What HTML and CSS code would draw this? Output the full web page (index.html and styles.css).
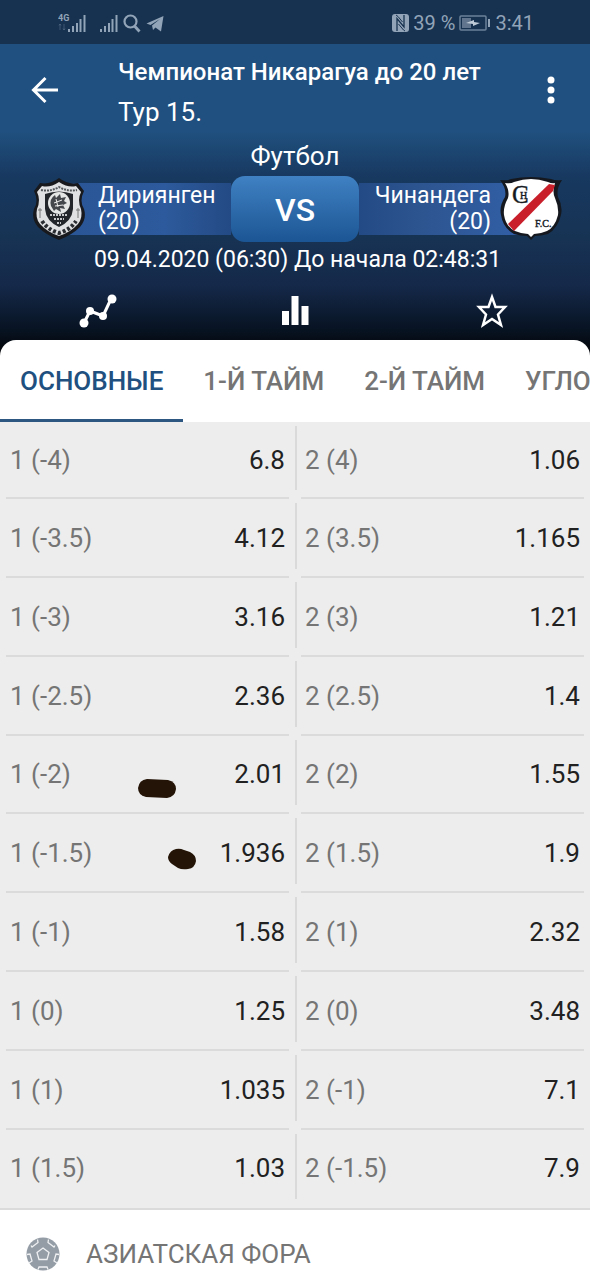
FILE: index.html
```html
<!DOCTYPE html>
<html lang="ru">
<head>
    <meta charset="utf-8">
    <meta name="viewport" content="width=device-width, initial-scale=1">
    <title>Чемпионат Никарагуа до 20 лет</title>
    <link rel="stylesheet" href="styles.css">
</head>
<body>
    <div class="status-bar">
        <div class="status-left">
            <svg width="28" height="20" viewBox="0 0 28 20" fill="currentColor">
                <text x="0" y="8" font-size="9" font-weight="700">4G</text>
                <path d="M2 11v6M1 12.500l1-1.500 1 1.500M6 11v6M5 15.500l1 1.500 1-1.500" fill="none" stroke="currentColor" opacity=".3"/>
                <path d="M10 16h2v3h-2zM14 13h2v6h-2zM18 10h2v9h-2zM21.500 6h2v13h-2zM25.500 2h2v17h-2z"/>
            </svg>
            <svg class="signal" width="19" height="20" viewBox="0 0 19 20" fill="currentColor">
                <path d="M1 16h2v3H1zM5 13h2v6H5zM9 10h2v9H9zM12.500 6h2v13h-2zM16.500 2h2v17h-2z"/>
            </svg>
            <svg width="18" height="20" viewBox="0 0 18 20" fill="none" stroke="currentColor" stroke-width="2.200">
                <circle cx="7.500" cy="8.500" r="6"/>
                <path d="M11.500 13l5 5.500" stroke-width="2.800"/>
            </svg>
            <svg width="18" height="20" viewBox="0 0 18 20" fill="currentColor">
                <path d="M.5 10.500L17.500 3 15 18.500 9.500 14.500 7 17 6 12.500 14 6 4.500 12z"/>
            </svg>
        </div>
        <div class="status-right">
            <svg width="17" height="18" viewBox="0 0 17 18">
                <rect width="17" height="18" rx="3" fill="currentColor"/>
                <path d="M5 17V4.500l7 8.500V1" fill="none" stroke="#173250" stroke-width="1.300"/>
                <path d="M4 1l2 1.500 4.500 5.500M6.500 10l5 6 1.500 1" fill="none" stroke="#173250"/>
            </svg>
            <span>39 %</span>
            <svg class="battery" width="32" height="16" viewBox="0 0 32 16">
                <rect x="1" y="1" width="26" height="14" rx="1" fill="none" stroke="currentColor" stroke-width="1.500" opacity=".7"/>
                <path d="M3 3h9v10H3z" fill="currentColor" opacity=".6"/>
                <path d="M7 8l8-3v2l6 1-7 3V9z" fill="#c0cbd8"/>
                <path d="M29 4h2v8h-2z" fill="currentColor"/>
            </svg>
            <span>3:41</span>
        </div>
    </div>

    <header class="header">
        <div class="app-bar">
            <button class="icon-button" aria-label="Назад">
                <svg width="28" height="28" viewBox="0 0 28 28" fill="none" stroke="#fff" stroke-width="3">
                    <path d="M27 14H3M14.500 2L2.500 14l12 12"/>
                </svg>
            </button>
            <div class="titles">
                <h1>Чемпионат Никарагуа до 20 лет</h1>
                <p>Тур 15.</p>
            </div>
            <button class="icon-button" aria-label="Меню">
                <svg width="8" height="28" viewBox="0 0 8 28" fill="#fff">
                    <circle cx="4" cy="4" r="3.500"/>
                    <circle cx="4" cy="14" r="3.500"/>
                    <circle cx="4" cy="24" r="3.500"/>
                </svg>
            </button>
        </div>

        <p class="sport">Футбол</p>

        <div class="match">
            <div class="team home">
                <svg class="crest" width="54" height="64" viewBox="0 0 54 64">
                    <path d="M27 1Q36 8 46 6l6 8q-5 10 0 18 3 10-4 18Q40 58 27 63 14 58 6 50-1 42 2 32q5-8 0-18l6-8Q18 8 27 1z" fill="#17191c"/>
                    <path d="M27 5Q36 11 44 9l5 6q-4 8 0 17 2 9-3 15Q39 55 27 59 15 55 8 47 3 41 5 32q4-9 0-17l5-6Q18 11 27 5z" fill="#dfe1e2"/>
                    <path d="M9 13q9 2 18-3 9 5 18 3" fill="none" stroke="#55585b" stroke-width="2" stroke-dasharray="2 1"/>
                    <path d="M13 17q14-5 28 0v15q-1 12-14 18-13-6-14-18z" fill="#222529"/>
                    <circle cx="27" cy="26" r="11" fill="#e5e6e6"/>
                    <path d="M19 29q-2-7 4-11l1 3 4-4 1 4 5-1-2 4 3 2-4 2 2 4-5-1 1 4-5-3-2 2z" fill="#44484c"/>
                    <path d="M22 26l8-3M23 29l8-1M24 22l2 8" stroke="#eee"/>
                    <path d="M18 38h18M22 42h10M25 46h4" stroke="#c5c7c9" stroke-width="2" stroke-dasharray="2 1"/>
                    <path d="M8 31v10M46 31v10M6 33h4M44 33h4" stroke="#777"/>
                    <path d="M10 44q6 9 17 12 11-3 17-12" fill="none" stroke="#292c30" stroke-width="4" stroke-dasharray="3 2"/>
                </svg>
                <span class="team-name">Дириянген<br>(20)</span>
            </div>
            <div class="versus">VS</div>
            <div class="team away">
                <span class="team-name">Чинандега<br>(20)</span>
                <svg class="crest" width="64" height="64" viewBox="0 0 64 64">
                    <path d="M1 3q7 1 11-1Q22 0 32 0t20 2q5 2 11 1-6 9-4 17 5 9 3 18-3 13-13 19-7 2-13 2l-4 4-4-4q-7 0-13-2Q4 51 2 38q-2-9 4-18Q8 12 1 3z" fill="#15191f"/>
                    <path d="M6 6q6 1 9-1Q24 2 32 2t17 3q4 2 7 1-3 9 0 15 4 9 3 17-3 12-11 16-7 3-13 3l-3 3-3-3q-6 0-13-3Q7 50 5 38q-1-8 4-17 2-7-3-15z" fill="#fff"/>
                    <path d="M50 7l6 1-2 6-39 40-6-7z" fill="#c91f2b"/>
                    <text class="crest-letter" x="13" y="26" font-size="25">C</text>
                    <text class="crest-letter" x="21" y="22" font-size="10">H</text>
                    <text class="crest-letter" x="36" y="50" font-size="10">F.C.</text>
                </svg>
            </div>
        </div>

        <p class="start-time">09.04.2020 (06:30) До начала 02:48:31</p>

        <div class="actions">
            <button class="icon-button" aria-label="График">
                <svg width="38" height="34" viewBox="0 0 38 34" fill="#fff">
                    <path d="M5 29l6-12 13 5 8-17" fill="none" stroke="#fff" stroke-width="3"/>
                    <circle cx="5" cy="29" r="4.500"/>
                    <circle cx="11" cy="17" r="4"/>
                    <circle cx="24" cy="22" r="4"/>
                    <circle cx="33" cy="5" r="4.500"/>
                </svg>
            </button>
            <button class="icon-button" aria-label="Статистика">
                <svg width="28" height="32" viewBox="0 0 28 32" fill="#fff">
                    <path d="M1 16h7v14H1zM10.500 1h7v29h-7zM20.500 11h7v19h-7z"/>
                </svg>
            </button>
            <button class="icon-button" aria-label="В избранное">
                <svg width="32" height="36" viewBox="0 0 32 36" fill="none" stroke="#fff" stroke-width="2.500">
                    <path d="M16 4l3.500 10H29l-7 7.500 3 10.500-9-6-9 6 3-10.500L3 14h9.500z"/>
                </svg>
            </button>
        </div>
    </header>

    <main class="sheet">
        <nav class="tabs">
            <a href="#main" class="tab active">ОСНОВНЫЕ</a>
            <a href="#half1" class="tab">1-Й ТАЙМ</a>
            <a href="#half2" class="tab">2-Й ТАЙМ</a>
            <a href="#corners" class="tab">УГЛОВЫЕ</a>
        </nav>

        <div class="odds" id="main">
            <div class="row">
                <button class="bet"><span>1 (-4)</span><b>6.8</b></button>
                <button class="bet"><span>2 (4)</span><b>1.06</b></button>
            </div>
            <div class="row">
                <button class="bet"><span>1 (-3.5)</span><b>4.12</b></button>
                <button class="bet"><span>2 (3.5)</span><b>1.165</b></button>
            </div>
            <div class="row">
                <button class="bet"><span>1 (-3)</span><b>3.16</b></button>
                <button class="bet"><span>2 (3)</span><b>1.21</b></button>
            </div>
            <div class="row">
                <button class="bet"><span>1 (-2.5)</span><b>2.36</b></button>
                <button class="bet"><span>2 (2.5)</span><b>1.4</b></button>
            </div>
            <div class="row">
                <button class="bet"><span>1 (-2)</span><b>2.01</b></button>
                <button class="bet"><span>2 (2)</span><b>1.55</b></button>
                <svg class="mark mark-long" width="40" height="20" viewBox="0 0 40 20">
                    <path d="M10 1L31 2Q39 4 39 11 38 19 30 20L9 19Q1 17 1 10 2 2 10 1z" fill="#241407"/>
                </svg>
            </div>
            <div class="row">
                <button class="bet"><span>1 (-1.5)</span><b>1.936</b></button>
                <button class="bet"><span>2 (1.5)</span><b>1.9</b></button>
                <svg class="mark mark-short" width="30" height="22" viewBox="0 0 30 22">
                    <path d="M9 1q4-1 8 1l6 2q6 3 6 9-1 7-8 8-6 1-10-1l-6-4Q1 13 1 9 3 2 9 1z" fill="#241407"/>
                </svg>
            </div>
            <div class="row">
                <button class="bet"><span>1 (-1)</span><b>1.58</b></button>
                <button class="bet"><span>2 (1)</span><b>2.32</b></button>
            </div>
            <div class="row">
                <button class="bet"><span>1 (0)</span><b>1.25</b></button>
                <button class="bet"><span>2 (0)</span><b>3.48</b></button>
            </div>
            <div class="row">
                <button class="bet"><span>1 (1)</span><b>1.035</b></button>
                <button class="bet"><span>2 (-1)</span><b>7.1</b></button>
            </div>
            <div class="row">
                <button class="bet"><span>1 (1.5)</span><b>1.03</b></button>
                <button class="bet"><span>2 (-1.5)</span><b>7.9</b></button>
            </div>
        </div>

        <h2 class="market">
            <svg width="34" height="34" viewBox="0 0 34 34">
                <circle cx="17" cy="17" r="16.500" fill="#949ca5"/>
                <g fill="none" stroke="#eef0f2" stroke-width="1.300">
                    <path d="M17 11l6 4.500-2 7h-8l-2-7z"/>
                    <path d="M5 8.500l1 1.500 6-4.500-.5-3M29 8.500L28 10l-6-4.500.5-3M1 17.500l3-.5 2 7-3 2M33 17.500l-3-.5-2 7 3 2M12 32.500l1-2.500h8l1 2.500"/>
                </g>
            </svg>
            <span>АЗИАТСКАЯ ФОРА</span>
        </h2>
    </main>
</body>
</html>
```
FILE: styles.css
```css
* {
    box-sizing: border-box;
}

body {
    margin: 0;
    background-color: #fff;
    font-family: Roboto, "Liberation Sans", sans-serif;
    overflow-x: hidden;
}

h1, h2, p {
    margin: 0;
    font-weight: 400;
}

svg {
    display: block;
    flex: none;
}

button {
    border: 0;
    padding: 0;
    background: none;
    font: inherit;
    color: inherit;
    cursor: pointer;
}

.status-bar {
    display: flex;
    justify-content: space-between;
    align-items: center;
    height: 44px;
    padding: 2px 56px 0 58px;
    background-color: #173250;
    color: #92a4b8;
    font-size: 20px;
}

.status-left, .status-right {
    display: flex;
    align-items: center;
    gap: 5px;
}

.status-right {
    gap: 4px;
}

.signal {
    margin-left: 8px;
}

/* Шапка матча */
.header {
    padding-bottom: 12px;
    margin-bottom: -16px;
    color: #fff;
    text-align: center;
    background: linear-gradient(#20507f 0, #20507f 28%, #17385f 43%, #173354 62%, #15294a 77%, #081424 91%, #04070c 98%);
}

.app-bar {
    display: flex;
    align-items: center;
    height: 92px;
    padding: 0 35px 0 31px;
    text-align: left;
}

.icon-button {
    display: flex;
    justify-content: center;
    align-items: center;
}

.titles {
    flex: 1;
    padding: 4px 0 0 59px;
}

.titles h1 {
    font-size: 24px;
    line-height: 40px;
    font-weight: 500;
}

.titles p {
    font-size: 26px;
    line-height: 40px;
}

.sport {
    font-size: 26px;
    line-height: 40px;
}

.match {
    display: grid;
    grid-template-columns: 1fr 128px 1fr;
    align-items: center;
    padding: 0 27px;
}

.team {
    display: flex;
    align-items: center;
}

.home {
    padding-left: 5px;
}

.team-name {
    flex: 1;
    font-size: 23px;
    line-height: 26px;
    background: linear-gradient(90deg, #2a5596, #2d5a9c 60%, #234a84);
}

.home .team-name {
    margin-left: -20px;
    padding-left: 32px;
    text-align: left;
}

.away .team-name {
    margin-right: -20px;
    padding-right: 28px;
    text-align: right;
    background: linear-gradient(90deg, #234a84, #2d5590 40%, #315ea6);
}

.crest {
    position: relative;
}

.crest-letter {
    font-family: "Liberation Serif", serif;
    fill: #15191f;
    stroke: #15191f;
    stroke-width: .4;
}

.versus {
    height: 66px;
    border-radius: 14px;
    background: linear-gradient(#3f81c3, #1c5594);
    font-size: 32px;
    line-height: 68px;
    font-weight: 500;
}

.start-time {
    padding-left: 5px;
    font-size: 23px;
    line-height: 36px;
}

.actions {
    display: grid;
    grid-template-columns: repeat(3, 1fr);
    height: 66px;
}

/* Ставки */
.sheet {
    position: relative;
    border-radius: 16px 16px 0 0;
    background-color: #fff;
    overflow: hidden;
}

.tabs {
    display: flex;
    overflow: hidden;
}

.tab {
    flex: none;
    padding: 4px 20px 0;
    border-bottom: 3px solid transparent;
    color: #757575;
    font-size: 26px;
    line-height: 75px;
    font-weight: 500;
    white-space: nowrap;
    text-decoration: none;
}

.tab.active {
    color: #20507f;
    border-color: #2d5680;
}

.odds {
    background-color: #ededed;
    border-bottom: 2px solid #dbdbdb;
}

.row {
    display: grid;
    grid-template-columns: 1fr 1fr;
    position: relative;
    height: 79px;
}

.row:first-child {
    height: 77px;
}

.row:nth-child(5n) {
    height: 78px;
}

.row::after {
    content: '';
    position: absolute;
    left: 50%;
    top: 4px;
    bottom: 9px;
    width: 2px;
    background-color: #dadada;
}

.bet {
    display: flex;
    justify-content: space-between;
    align-items: center;
    margin: 0 6px;
    padding: 0 4px;
    border-bottom: 2px solid #dbdbdb;
    color: #757575;
    font-size: 26px;
}

.row:last-child .bet {
    border-color: transparent;
}

.bet b {
    color: #212121;
    font-weight: 400;
}

.mark {
    position: absolute;
}

.mark-long {
    left: 137px;
    top: 42px;
}

.mark-short {
    left: 167px;
    top: 34px;
}

.market {
    display: flex;
    align-items: center;
    gap: 26px;
    padding: 26px;
    color: #757575;
    font-size: 26px;
    line-height: 36px;
}
```
